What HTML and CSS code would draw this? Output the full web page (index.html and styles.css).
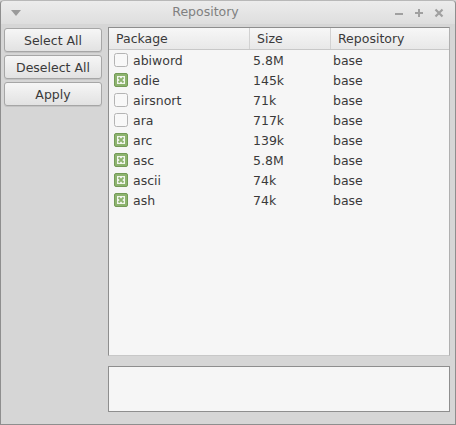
FILE: index.html
```html
<!DOCTYPE html>
<html>
<head>
<meta charset="utf-8">
<link rel="stylesheet" href="styles.css">
</head>
<body>
<div class="window">
  <div class="titlebar">
    <svg class="menu-tri" width="10" height="6" viewBox="0 0 10 6"><path d="M0 0 L10 0 L5 6 Z" fill="#9a9a9a"/></svg>
    <div class="title">Repository</div>
    <div class="controls">
      <svg width="10" height="10" viewBox="0 0 10 10"><rect x="1" y="5" width="8" height="2" fill="#a0a0a0"/></svg>
      <svg width="10" height="10" viewBox="0 0 10 10"><rect x="1" y="4" width="8" height="2" fill="#a0a0a0"/><rect x="4" y="1" width="2" height="8" fill="#a0a0a0"/></svg>
      <svg width="10" height="10" viewBox="0 0 10 10"><path d="M1.5 1.5 L8.5 8.5 M8.5 1.5 L1.5 8.5" stroke="#a0a0a0" stroke-width="2.2"/></svg>
    </div>
  </div>
  <div class="content">
    <div class="side">
      <button class="btn">Select All</button>
      <button class="btn">Deselect All</button>
      <button class="btn">Apply</button>
    </div>
    <div class="main">
      <div class="list">
        <div class="header">
          <div class="hcell c1">Package</div>
          <div class="hcell c2">Size</div>
          <div class="hcell c3">Repository</div>
        </div>
        <div class="row"><svg class="cb" width="14" height="14" viewBox="0 0 14 14"><rect x="0.5" y="0.5" width="13" height="13" rx="2" fill="#f8f8f8" stroke="#b4b4b4"/></svg><span class="name">abiword</span><span class="size">5.8M</span><span class="repo">base</span></div>
        <div class="row"><svg class="cb" width="14" height="14" viewBox="0 0 14 14"><rect x="0.5" y="0.5" width="13" height="13" rx="1.5" fill="#8db36f" stroke="#739b57"/><rect x="3" y="3" width="8" height="8" fill="#f2f6ee"/><path d="M4.5 4.5 L9.5 9.5 M9.5 4.5 L4.5 9.5" stroke="#8db36f" stroke-width="1.8"/></svg><span class="name">adie</span><span class="size">145k</span><span class="repo">base</span></div>
        <div class="row"><svg class="cb" width="14" height="14" viewBox="0 0 14 14"><rect x="0.5" y="0.5" width="13" height="13" rx="2" fill="#f8f8f8" stroke="#b4b4b4"/></svg><span class="name">airsnort</span><span class="size">71k</span><span class="repo">base</span></div>
        <div class="row"><svg class="cb" width="14" height="14" viewBox="0 0 14 14"><rect x="0.5" y="0.5" width="13" height="13" rx="2" fill="#f8f8f8" stroke="#b4b4b4"/></svg><span class="name">ara</span><span class="size">717k</span><span class="repo">base</span></div>
        <div class="row"><svg class="cb" width="14" height="14" viewBox="0 0 14 14"><rect x="0.5" y="0.5" width="13" height="13" rx="1.5" fill="#8db36f" stroke="#739b57"/><rect x="3" y="3" width="8" height="8" fill="#f2f6ee"/><path d="M4.5 4.5 L9.5 9.5 M9.5 4.5 L4.5 9.5" stroke="#8db36f" stroke-width="1.8"/></svg><span class="name">arc</span><span class="size">139k</span><span class="repo">base</span></div>
        <div class="row"><svg class="cb" width="14" height="14" viewBox="0 0 14 14"><rect x="0.5" y="0.5" width="13" height="13" rx="1.5" fill="#8db36f" stroke="#739b57"/><rect x="3" y="3" width="8" height="8" fill="#f2f6ee"/><path d="M4.5 4.5 L9.5 9.5 M9.5 4.5 L4.5 9.5" stroke="#8db36f" stroke-width="1.8"/></svg><span class="name">asc</span><span class="size">5.8M</span><span class="repo">base</span></div>
        <div class="row"><svg class="cb" width="14" height="14" viewBox="0 0 14 14"><rect x="0.5" y="0.5" width="13" height="13" rx="1.5" fill="#8db36f" stroke="#739b57"/><rect x="3" y="3" width="8" height="8" fill="#f2f6ee"/><path d="M4.5 4.5 L9.5 9.5 M9.5 4.5 L4.5 9.5" stroke="#8db36f" stroke-width="1.8"/></svg><span class="name">ascii</span><span class="size">74k</span><span class="repo">base</span></div>
        <div class="row"><svg class="cb" width="14" height="14" viewBox="0 0 14 14"><rect x="0.5" y="0.5" width="13" height="13" rx="1.5" fill="#8db36f" stroke="#739b57"/><rect x="3" y="3" width="8" height="8" fill="#f2f6ee"/><path d="M4.5 4.5 L9.5 9.5 M9.5 4.5 L4.5 9.5" stroke="#8db36f" stroke-width="1.8"/></svg><span class="name">ash</span><span class="size">74k</span><span class="repo">base</span></div>
      </div>
      <div class="info"></div>
    </div>
  </div>
</div>
</body>
</html>
```
FILE: styles.css
```css
html, body {
  margin: 0;
  padding: 0;
  width: 456px;
  height: 425px;
  overflow: hidden;
  background: #d6d6d6;
}
body {
  font-family: "DejaVu Sans", sans-serif;
  font-size: 12.5px;
  color: #3a3a3a;
}
.window {
  box-sizing: border-box;
  width: 456px;
  height: 425px;
  border: 1px solid #8e8e8e;
  border-top-color: #b8b8b8;
  border-radius: 4px 4px 0 0;
  background: #d6d6d6;
  display: flex;
  flex-direction: column;
}
.titlebar {
  height: 23px;
  display: flex;
  align-items: center;
  background: linear-gradient(#ececec, #dedede);
  border-radius: 4px 4px 0 0;
  flex: none;
}
.menu-tri {
  margin-left: 10px;
  margin-top: 1px;
  flex: none;
}
.title {
  flex: 1;
  text-align: center;
  color: #808080;
  font-size: 12.5px;
  padding-right: 4px;
  margin-top: -2px;
}
.controls {
  margin-right: 11px;
  display: flex;
  gap: 10px;
  align-items: center;
  flex: none;
}
.content {
  flex: 1;
  display: flex;
  padding: 3px 5px 12px 3px;
  gap: 6px;
  min-height: 0;
}
.side {
  width: 98px;
  flex: none;
  display: flex;
  flex-direction: column;
  gap: 3px;
  padding-top: 1px;
}
.btn {
  height: 24px;
  border: 1px solid #a6a6a6;
  border-radius: 3px;
  background: linear-gradient(#f6f6f6, #e2e2e2);
  font-family: "DejaVu Sans", sans-serif;
  font-size: 12.5px;
  color: #3a3a3a;
  padding: 0;
  box-shadow: 0 1px 0 #c4c4c4;
}
.main {
  flex: 1;
  display: flex;
  flex-direction: column;
  gap: 10px;
}
.list {
  flex: 1;
  background: #f6f6f6;
  border: 1px solid #8e8e8e;
  border-right-color: #b0b0b0;
  border-bottom-color: #c8c8c8;
}
.header {
  display: flex;
  height: 21px;
  background: linear-gradient(#f7f7f7, #e8e8e8);
  border-bottom: 1px solid #c8c8c8;
}
.hcell {
  line-height: 21px;
  padding-left: 7px;
  border-right: 1px solid #d2d2d2;
  box-sizing: border-box;
}
.c1 { width: 141px; }
.c2 { width: 81px; }
.c3 { flex: 1; border-right: none; }
.row {
  display: flex;
  align-items: center;
  height: 20px;
}
.cb {
  margin-left: 5px;
  margin-right: 5px;
  flex: none;
}
.name { width: 120px; }
.size { width: 80px; }
.repo { flex: 1; }
.info {
  height: 44px;
  background: #f6f6f6;
  border: 1px solid #8e8e8e;
}
```
